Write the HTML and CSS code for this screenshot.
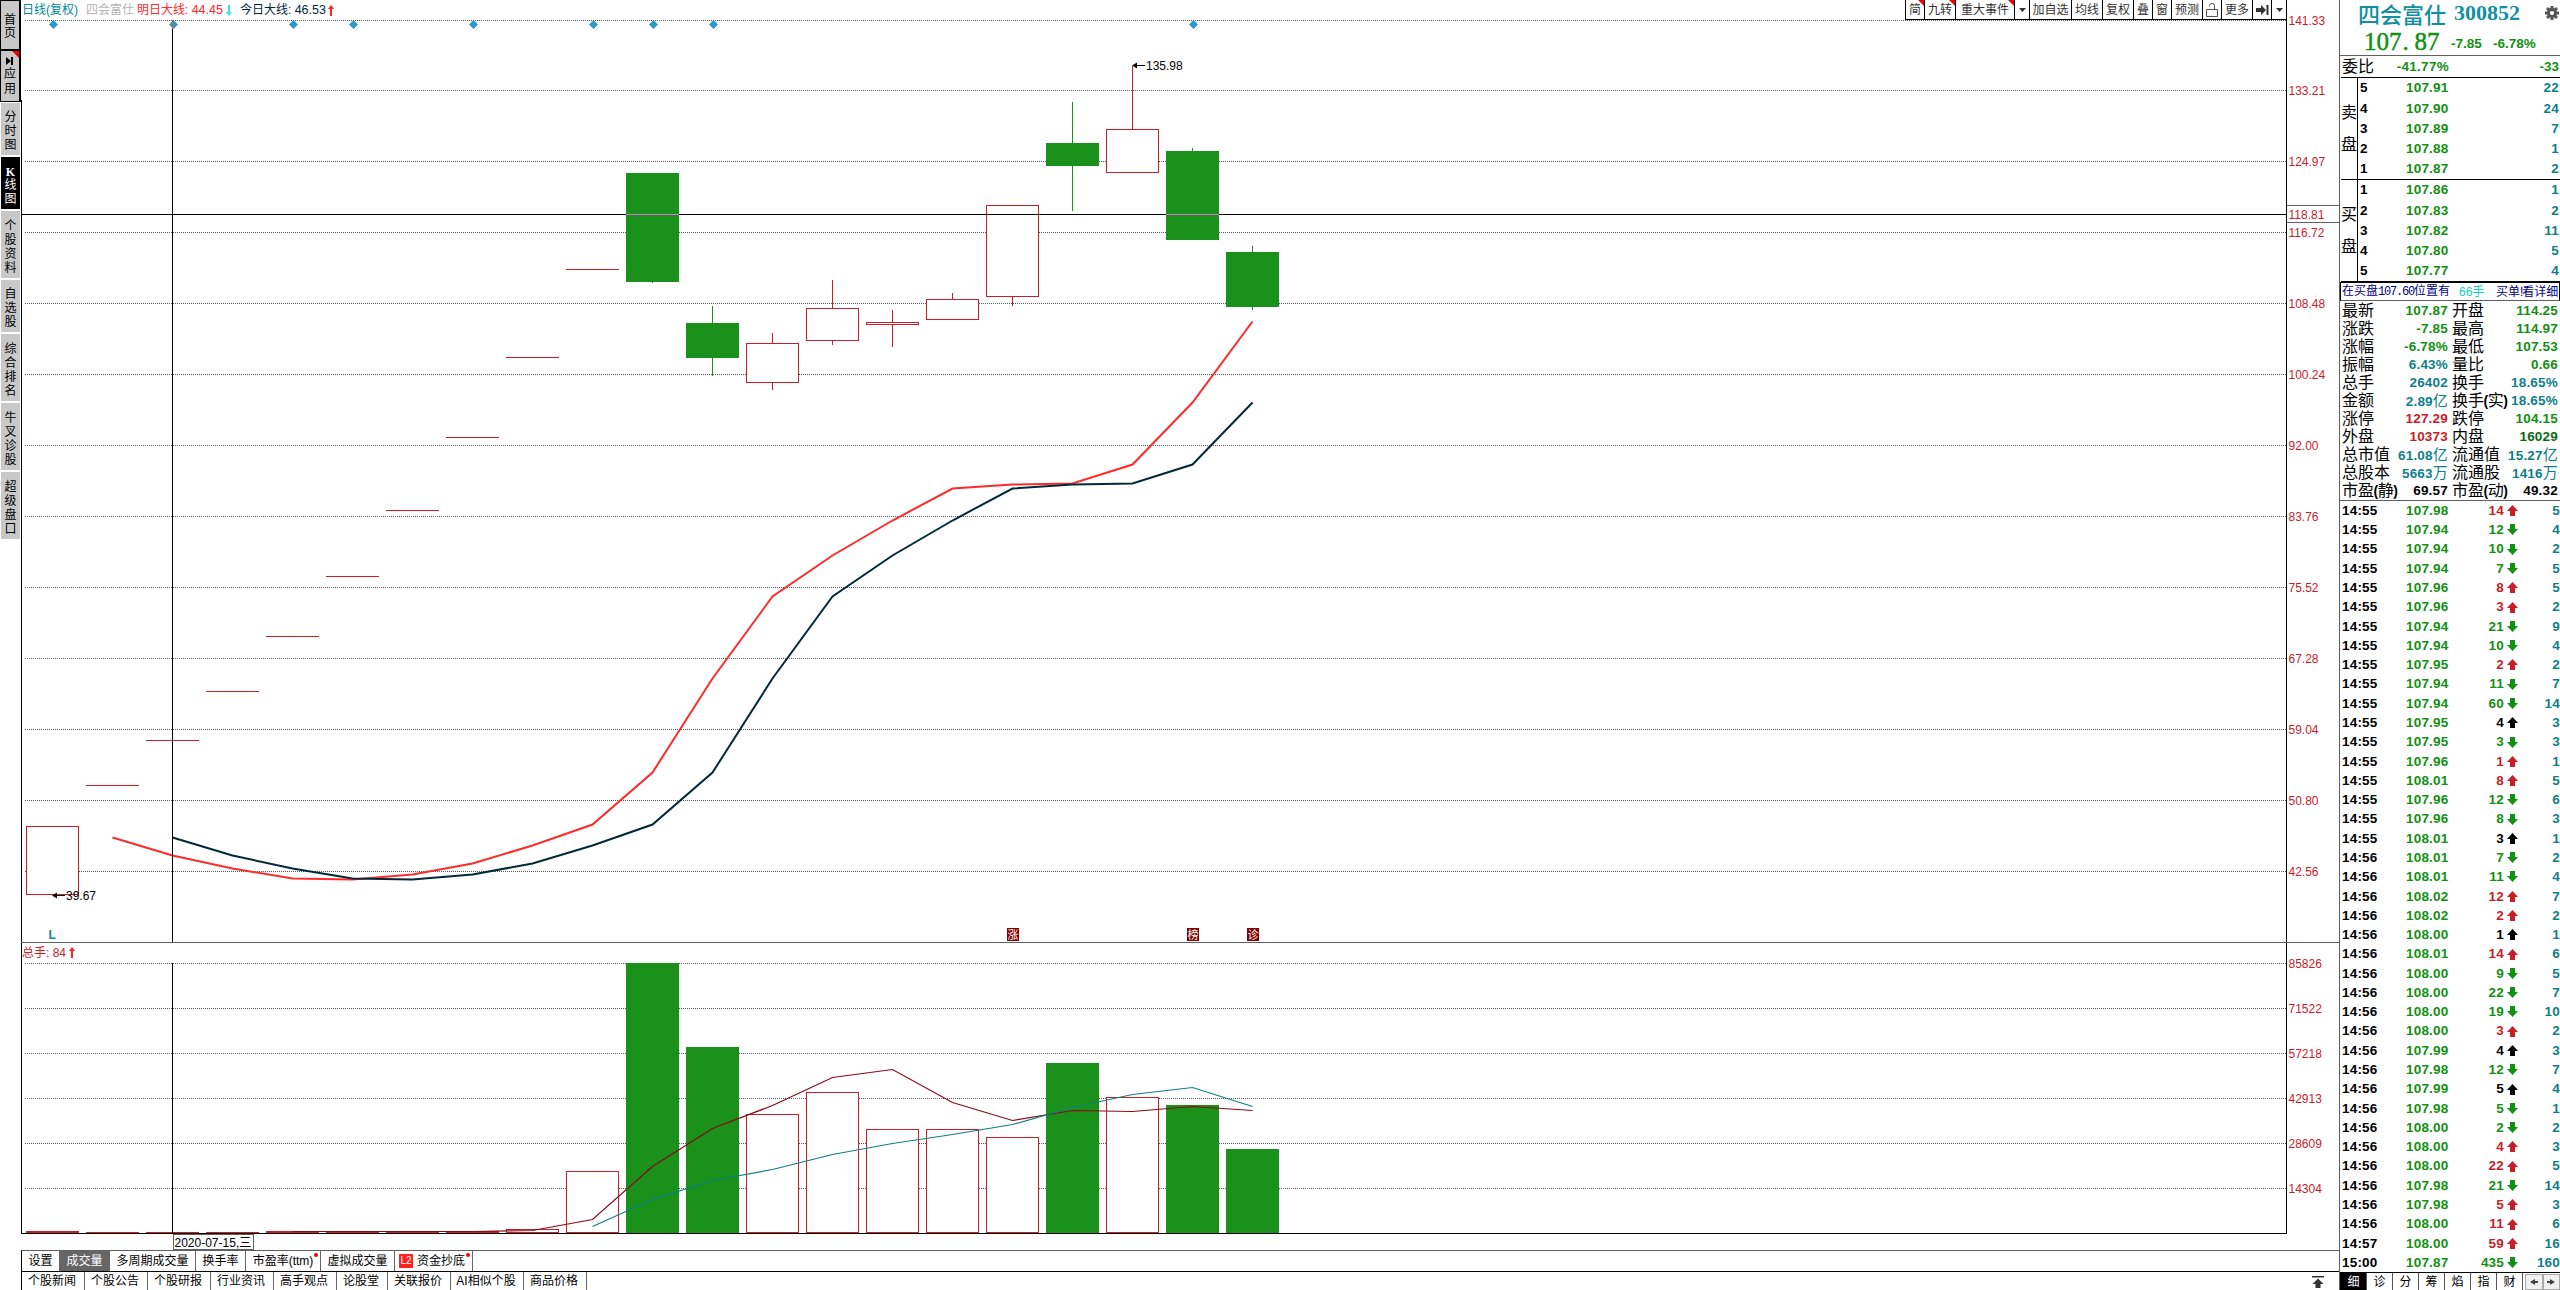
FILE: index.html
```
<!DOCTYPE html>
<html lang="zh-CN">

<head>
  <meta charset="UTF-8">
  <meta name="viewport" content="width=device-width, initial-scale=1.0">
  <title>四会富仕 300852</title>
  <link rel="stylesheet" href="styles.css">
</head>

<body>
  <div class="app">
    <nav class="side">
      <div class="side-tab framed t-home"><span>首</span><span>页</span></div>
      <div class="side-tab framed corner t-app">
        <svg width="8" height="8" viewBox="0 0 8 8"><path d="M0 0L5 4L0 8ZM5 0H7V8H5Z"/></svg>
        <span>应</span><span>用</span>
      </div>
      <div class="side-tab h3"><span>分</span><span>时</span><span>图</span></div>
      <div class="side-tab h3 active"><span class="k">K</span><span>线</span><span>图</span></div>
      <div class="side-tab h4"><span>个</span><span>股</span><span>资</span><span>料</span></div>
      <div class="side-tab h3"><span>自</span><span>选</span><span>股</span></div>
      <div class="side-tab h4"><span>综</span><span>合</span><span>排</span><span>名</span></div>
      <div class="side-tab h4"><span>牛</span><span>叉</span><span>诊</span><span>股</span></div>
      <div class="side-tab h4"><span>超</span><span>级</span><span>盘</span><span>口</span></div>
    </nav>

    <main class="main">
      <header class="head">
        <div class="legend">
          <span class="lg-period">日线(复权)</span>
          <span class="lg-name">四会富仕</span>
          <span class="lg-next">明日大线: <b>44.45</b></span>
          <svg class="lg-arrow down" width="6" height="11" viewBox="0 0 6 11"><path d="M2 0H4V7H6L3 11L0 7H2Z"/></svg>
          <span class="lg-today">今日大线: <b>46.53</b></span>
          <svg class="lg-arrow up" width="6" height="11" viewBox="0 0 6 11"><path d="M2 11H4V4H6L3 0L0 4H2Z"/></svg>
        </div>
        <div class="tools">
          <div class="tool w19 corner">简</div>
          <div class="tool w31 corner">九转</div>
          <div class="tool w59 corner">重大事件</div>
          <div class="tool w15"><svg width="7" height="4" viewBox="0 0 7 4"><path d="M0 0H7L3.5 4Z"/></svg></div>
          <div class="tool w42">加自选</div>
          <div class="tool w31">均线</div>
          <div class="tool w31">复权</div>
          <div class="tool w19">叠</div>
          <div class="tool w19">窗</div>
          <div class="tool w31">预测</div>
          <div class="tool w19"><svg width="12" height="14" viewBox="0 0 12 14"><path class="lock" d="M.5 6.5H11.5V13.5H.5ZM3.5 3.5V2.5Q3.5 .5 6 .5Q8.5 .5 8.5 2.5V6.5"/></svg></div>
          <div class="tool w31">更多</div>
          <div class="tool w19"><svg width="13" height="10" viewBox="0 0 13 10"><path d="M0 3H5V0L10 5L5 10V7H0ZM10.500 0H12.500V10H10.500Z"/></svg></div>
          <div class="tool w15"><svg width="7" height="4" viewBox="0 0 7 4"><path d="M0 0H7L3.5 4Z"/></svg></div>
        </div>
      </header>

      <svg id="chart" class="chart" width="2318" height="1230" viewBox="21 20 2318 1230"></svg>

      <div class="tabs indicators">
        <span class="w39">设置</span>
        <span class="w50 on">成交量</span>
        <span class="w86">多周期成交量</span>
        <span class="w50">换手率</span>
        <span class="w75 dot">市盈率(ttm)</span>
        <span class="w74">虚拟成交量</span>
        <span class="w78 dot"><i class="l2">L2</i>资金抄底</span>
      </div>
      <div class="tabs news">
        <span class="w63">个股新闻</span>
        <span class="w63">个股公告</span>
        <span class="w63">个股研报</span>
        <span class="w63">行业资讯</span>
        <span class="w63">高手观点</span>
        <span class="w51">论股堂</span>
        <span class="w63">关联报价</span>
        <span class="w73">AI相似个股</span>
        <span class="w63">商品价格</span>
        <svg class="to-top" width="12" height="12" viewBox="0 0 12 12"><path d="M0 0H12V1.500H0ZM6 2.500L11.500 8H8.500V12H3.500V8H.5Z"/></svg>
      </div>
    </main>

    <aside class="quote">
      <div class="q-title">
        <span class="q-name">四会富仕</span><span class="q-code">300852</span>
        <svg class="gear" width="14" height="14" viewBox="-7 -7 14 14">
          <g id="teeth"></g>
          <circle r="3.600"/>
        </svg>
      </div>
      <div class="q-price">
        <span class="big">107<i>.</i>87</span><span class="chg">-7.85</span><span class="pct">-6.78%</span>
      </div>
      <div class="q-ratio"><span class="lbl">委比</span><span class="val">-41.77%</span><span class="dif">-33</span></div>
      <div class="book">
        <div class="side-name"><span>卖</span><span>盘</span></div>
        <div class="levels" id="sell"></div>
      </div>
      <div class="book">
        <div class="side-name"><span>买</span><span>盘</span></div>
        <div class="levels" id="buy"></div>
      </div>
      <div class="notice"><span>在买盘<tt>107.60</tt>位置有</span><span class="cy">66手</span><span>买单!</span><span class="more">看详细</span></div>
      <div class="stats" id="stats"></div>
      <div class="ticks" id="ticks"></div>
      <div class="q-tabs">
        <span class="on">细</span><span>诊</span><span>分</span><span>筹</span><span>焰</span><span>指</span><span>财</span>
        <div class="pager">
          <b><svg width="8" height="6" viewBox="0 0 8 6"><path d="M0 3L5 0V2H8V4H5V6Z"/></svg></b>
          <b><svg width="8" height="6" viewBox="0 0 8 6"><path d="M8 3L3 0V2H0V4H3V6Z"/></svg></b>
        </div>
      </div>
    </aside>
  </div>
  <script src="script.js"></script>
</body>

</html>
```

FILE: styles.css
```
* {
  margin: 0;
  padding: 0;
  box-sizing: border-box;
}

body {
  background: #fff;
  font-family: "Liberation Sans", "Noto Sans CJK SC", sans-serif;
  font-size: 12px;
  line-height: 1;
  color: #000;
  overflow: hidden;
}

i {
  font-style: normal;
}

.app {
  display: flex;
  width: 2560px;
  height: 1290px;
}

/* left tabs */
.side {
  width: 21px;
  display: flex;
  flex-direction: column;
}

.side-tab {
  position: relative;
  display: flex;
  flex-direction: column;
  align-items: center;
  justify-content: center;
  gap: 2px;
  margin: 0 1px 2px 1px;
  background: #c8c8c8;
}

.side-tab span {
  height: 12px;
}

.framed {
  margin: 0;
  border: 1px solid #000;
  border-right-width: 2px;
  gap: 1px;
}

.t-home {
  height: 50px;
  padding-top: 3px;
}

.t-app {
  height: 52px;
  gap: 3px;
  margin-bottom: 1px;
}

.h3 {
  height: 52px;
  padding-top: 3px;
}

.h4 {
  height: 67px;
  padding-top: 4px;
}

.active {
  background: #000;
  color: #fff;
}

.side-tab .k {
  font: bold 12px "Liberation Serif", serif;
}

.corner {
  position: relative;
}

.corner::after {
  content: "";
  position: absolute;
  top: 0;
  right: 0;
  border-top: 7px solid #f00000;
  border-left: 7px solid transparent;
}

/* chart column */
.main {
  width: 2318px;
  display: flex;
  flex-direction: column;
}

.head {
  height: 20px;
  display: flex;
  justify-content: space-between;
  padding-right: 53px;
}

.legend {
  display: flex;
  align-items: center;
  padding-left: 1px;
  white-space: nowrap;
}

.legend b {
  font-weight: normal;
  font-size: 12.5px;
}

.lg-period {
  width: 64px;
  color: #008a94;
}

.lg-name {
  width: 51px;
  color: #b4b4b4;
}

.lg-next {
  width: 89px;
  color: #ff2a2a;
}

.lg-today {
  width: 88px;
  color: #002a3a;
}

.lg-arrow.down {
  fill: #2ee6e6;
  margin-right: 8px;
}

.lg-arrow.up {
  fill: #f22;
}

.tools {
  display: flex;
  border-bottom: 1px solid #000;
}

.tool {
  display: flex;
  align-items: center;
  justify-content: center;
  border-left: 1px solid #000;
  color: #333;
  fill: #333;
}

.tools .corner::after {
  border-top-width: 6px;
  border-left-width: 6px;
}

.lock {
  fill: none;
  stroke: #555;
}

.w15 { width: 15px; }
.w19 { width: 19px; }
.w31 { width: 31px; }
.w42 { width: 42px; }
.w59 { width: 59px; }

.chart {
  display: block;
  overflow: visible;
}

.chart text {
  font-size: 12px;
}

.crisp {
  shape-rendering: crispEdges;
}

.grid {
  stroke: #5a5a5a;
  stroke-dasharray: 1 1;
}

.axis-label {
  fill: #cc1a2a;
}

.up-bar {
  fill: #fff;
  stroke: #c81e28;
}

.down-bar {
  fill: #1a911a;
}

.frame {
  stroke: #000;
  fill: none;
}

.gray {
  stroke: #606060;
  fill: none;
}

.ma {
  fill: none;
  stroke-width: 2;
}

.vol-ma {
  fill: none;
  stroke-width: 1.2;
}

/* footer tabs */
.tabs {
  display: flex;
  height: 20px;
}

.tabs span {
  position: relative;
  display: flex;
  align-items: center;
  justify-content: center;
  border-right: 1px solid #666;
  white-space: nowrap;
}

.indicators {
  height: 21px;
  border-top: 1px solid #606060;
  border-left: 1px solid #000;
}

.indicators .on {
  background: #666;
  color: #fff;
}

.dot::after {
  content: "";
  position: absolute;
  top: 2px;
  right: 2px;
  width: 4px;
  height: 4px;
  border-radius: 2px;
  background: #f00;
}

.l2 {
  width: 14px;
  height: 14px;
  margin-right: 4px;
  background: #f22;
  color: #fff;
  font-size: 10px;
  line-height: 14px;
  text-align: center;
}

.w78 {
  padding-right: 3px;
}

.news {
  height: 19px;
  border-top: 1px solid #000;
  border-left: 1px solid #000;
}

.news span {
  padding-right: 2px;
}

.to-top {
  margin: 4px 15px 0 auto;
  fill: #333;
}

.w39 { width: 38px; }
.w50 { width: 50px; }
.w51 { width: 51px; }
.w63 { width: 63px; }
.w73 { width: 73px; }
.w74 { width: 74px; }
.w75 { width: 75px; }
.w78 { width: 78px; }
.w86 { width: 86px; }

/* quote panel */
.quote {
  width: 221px;
  border-left: 1px solid #606060;
  display: flex;
  flex-direction: column;
  font-size: 13.5px;
  font-weight: bold;
  color: #129012;
}

.q-title {
  height: 25px;
  display: flex;
  align-items: center;
  padding-left: 18px;
  color: #1090a0;
}

.q-name {
  width: 96px;
  font: 500 22px/24px "Noto Sans CJK SC", sans-serif;
}

.q-code {
  font: bold 22px/24px "Liberation Serif", serif;
}

.gear {
  margin-left: auto;
  margin-right: 1px;
  fill: #555;
}

.gear circle {
  fill: none;
  stroke: #555;
  stroke-width: 3;
}

.q-price {
  height: 31px;
  display: flex;
  align-items: center;
  padding: 3px 0 0 24px;
  border-bottom: 1px solid #606060;
}

.big {
  width: 87px;
  font: 25px/26px "Liberation Serif", serif;
  -webkit-text-stroke: 0.500px #129012;
}

.big i {
  display: inline-block;
  width: 13px;
  padding-left: 1px;
}

.q-price .chg {
  width: 42px;
  padding-top: 5px;
}

.q-price .pct {
  padding-top: 5px;
}

.lbl {
  font-size: 16px;
  font-weight: normal;
  color: #000;
  white-space: nowrap;
}

.q-ratio {
  height: 22px;
  display: flex;
  align-items: center;
  margin-left: 1px;
  padding: 1px 1px 0 1px;
  border-bottom: 1px solid #000;
}

.q-ratio .val {
  width: 75px;
  text-align: right;
  letter-spacing: 0.300px;
}

.q-ratio .dif {
  margin-left: auto;
}

.book {
  display: flex;
  height: 102px;
  margin-left: 1px;
  border-bottom: 1px solid #000;
}

.side-name {
  width: 17px;
  border-right: 1px solid #000;
  display: flex;
  flex-direction: column;
  align-items: center;
  gap: 16px;
  padding-top: 27px;
  font-size: 16px;
  font-weight: normal;
  color: #000;
}

.levels {
  flex: 1;
  display: flex;
  flex-direction: column;
  letter-spacing: 0.200px;
}

.level {
  flex: 1;
  display: flex;
  align-items: center;
  padding: 0 1px 0 2px;
}

.level .n {
  width: 46px;
  color: #000;
}

.level .q {
  margin-left: auto;
  color: #0d7f88;
}

.notice {
  display: flex;
  align-items: center;
  height: 19px;
  padding-left: 1px;
  border: 1px solid #000;
  border-bottom-color: #606060;
  font-size: 12px;
  font-weight: normal;
  color: #000080;
  white-space: nowrap;
}

.notice tt {
  font: 12px "Liberation Mono", monospace;
  letter-spacing: -1.200px;
}

.notice span:first-child {
  width: 117px;
}

.notice .cy {
  width: 37px;
  color: #14cfc0;
}

.notice .more {
  margin-left: -1px;
}

.stats {
  height: 200px;
  display: grid;
  grid-template-columns: 107px 107px;
  grid-auto-rows: 18px;
  column-gap: 3px;
  padding: 1px 0 0 2px;
  border-bottom: 1px solid #606060;
}

.stat {
  display: flex;
  justify-content: space-between;
  align-items: center;
  white-space: nowrap;
}

.stat > b {
  padding-right: 1px;
  letter-spacing: 0.200px;
}

.stat u {
  text-decoration: none;
  font-size: 15px;
  font-weight: normal;
}

.stat .lbl i {
  font-size: 14px;
  font-weight: bold;
  margin: 0 -0.500px;
}

.c-g { color: #129012; fill: #129012; }
.c-t { color: #0d7f88; }
.c-r { color: #c81e28; fill: #c81e28; }
.c-k { color: #000; fill: #000; }
.c-d { color: #0a6a14; }

.ticks {
  height: 771px;
  display: flex;
  flex-direction: column;
  letter-spacing: 0.200px;
}

.tick {
  flex: 1;
  display: flex;
  align-items: center;
  padding-left: 2px;
}

.tick .t {
  width: 64px;
  color: #000;
}

.tick .n {
  width: 98px;
  display: flex;
  justify-content: space-between;
}

.tick svg {
  margin-left: 3px;
}

.tick .q {
  margin-left: auto;
  color: #0d7f88;
}

.q-tabs {
  flex: 1;
  display: flex;
  border-top: 1px solid #000;
  border-left: 1px solid #000;
  font-size: 12px;
  font-weight: normal;
  color: #000;
}

.q-tabs span {
  width: 26px;
  display: flex;
  align-items: center;
  justify-content: center;
  border-right: 1px solid #555;
}

.q-tabs .on {
  background: #000;
  color: #fff;
}

.pager {
  flex: 1;
  display: flex;
  margin-left: 2px;
}

.pager b {
  flex: 1;
  display: flex;
  align-items: center;
  justify-content: center;
  margin-top: 1px;
  border: 1px solid #aaa;
  background: #f0f0f0;
  fill: #444;
}
```

FILE: script.js
```
const chart = document.querySelector('#chart');
const LEFT = 26;
const STEP = 60;
const WIDTH = 53;

const cx = i => 52.5 + i * STEP;
let out = '';

const line = (x1, y1, x2, y2, cls, extra = '') => {
  out += `<line x1="${x1}" y1="${y1}" x2="${x2}" y2="${y2}" class="crisp ${cls}" ${extra}/>`;
};
const text = (x, y, str, extra = '') => {
  out += `<text x="${x}" y="${y}" ${extra}>${str}</text>`;
};

// grid with axis labels
const prices = ['141.33', '133.21', '124.97', '116.72', '108.48', '100.24', '92.00', '83.76', '75.52', '67.28', '59.04', '50.80', '42.56'];
const priceY = [20, 90, 161, 232, 303, 374, 445, 516, 587, 658, 729, 800, 871];
const volumes = ['85826', '71522', '57218', '42913', '28609', '14304'];

prices.forEach((p, i) => {
  line(25, priceY[i] + 0.5, 2286, priceY[i] + 0.5, 'grid');
  text(2288.5, priceY[i] + 5, p, 'class="axis-label"');
});
volumes.forEach((v, i) => {
  const y = 963 + i * 45;
  line(25, y + 0.5, 2286, y + 0.5, 'grid');
  text(2288.5, y + 5, v, 'class="axis-label"');
});

// candles: [type, top, bottom, high, low]
const candles = [
  ['r', 826, 894], ['f', 785], ['f', 740], ['f', 691], ['f', 636], ['f', 576],
  ['f', 510], ['f', 437], ['f', 357], ['f', 269],
  ['g', 173, 282, 173, 283],
  ['g', 323, 358, 306, 376],
  ['r', 343, 382, 333, 390],
  ['r', 308, 340, 280, 345],
  ['r', 322, 324, 310, 347],
  ['r', 299, 319, 293, 319],
  ['r', 205, 296, 205, 306],
  ['g', 143, 166, 102, 211],
  ['r', 129, 172, 66, 172],
  ['g', 151, 240, 148, 240],
  ['g', 252, 307, 246, 310]
];

const bar = (i, type, top, bottom) => {
  const x = LEFT + i * STEP;
  if (type === 'g') {
    out += `<rect class="crisp down-bar" x="${x}" y="${top}" width="${WIDTH}" height="${bottom - top}"/>`;
  } else if (bottom === top) {
    line(x, top + 0.5, x + WIDTH, top + 0.5, '', 'stroke="#c81e28"');
  } else {
    out += `<rect class="crisp up-bar" x="${x + 0.5}" y="${top + 0.5}" width="${WIDTH - 1}" height="${bottom - top}"/>`;
  }
};

candles.forEach(([type, top, bottom, high, low], i) => {
  const color = type === 'g' ? '#1a911a' : '#c81e28';
  if (type === 'f') {
    bar(i, 'r', top, top);
    return;
  }
  if (high) {
    line(cx(i), high, cx(i), low, '', `stroke="${color}"`);
  }
  bar(i, type, top, bottom);
});

// volume bars
const vol = [1231, 1232, 1232, 1232, 1231, 1231, 1231, 1231, 1229, 1171, 963, 1047, 1114, 1092, 1129, 1129, 1137, 1063, 1097, 1105, 1149];
vol.forEach((top, i) => {
  const green = [10, 11, 17, 19, 20].includes(i);
  bar(i, green ? 'g' : 'r', top, green ? 1233 : 1232);
});

// averages
const poly = (start, ys, cls, color) => {
  const pts = ys.map((y, i) => `${cx(start + i)},${y + 0.5}`).join(' ');
  out += `<polyline class="${cls}" points="${pts}" stroke="${color}"/>`;
};
const ma = [837, 855, 868, 878, 879, 874, 863, 845, 824, 772, 678, 596, 555, 520, 488, 484, 483, 464, 402, 321];
poly(1, ma, 'ma', '#ff2a2a');
poly(2, ma.slice(0, -1), 'ma', '#002a3a');
poly(4, [1231, 1231, 1231, 1231, 1230, 1219, 1166, 1128, 1105, 1077, 1069, 1102, 1120, 1110, 1111, 1106, 1110], 'vol-ma', '#8a0a14');
poly(9, [1226, 1199, 1180, 1169, 1154, 1143, 1134, 1124, 1107, 1094, 1087, 1106], 'vol-ma', '#0d7f88');

// event diamonds
[0, 2, 4, 5, 7, 9, 10, 11, 19].forEach(i => {
  const x = cx(i) + 1;
  out += `<path d="M${x - 4.5} 24.5L${x} 20L${x + 4.5} 24.5L${x} 29Z" fill="#2b9ac8"/>`;
});

// frames
line(21.5, 100, 21.5, 1234, 'frame');
line(2286.5, 0, 2286.5, 1234, 'frame');
line(21, 1233.5, 2287, 1233.5, 'frame');
line(21, 942.5, 2339, 942.5, 'gray');

// crosshair
line(172.5, 20, 172.5, 942, 'frame');
line(172.5, 963, 172.5, 1234, 'frame');
line(172.5, 20, 172.5, 29, '', 'stroke="#d46437"');
line(22, 214.5, 2287, 214.5, 'frame');
[10, 19].forEach(i => line(LEFT + i * STEP, 214.5, LEFT + i * STEP + WIDTH, 214.5, '', 'stroke="#e56ee5"'));
out += '<rect class="crisp gray" x="2286.5" y="205.500" width="52.500" height="17"/>';
line(2286.5, 205, 2286.5, 223, 'frame');
text(2288.5, 218.5, '118.81', 'class="axis-label"');
out += '<rect class="crisp gray" x="173.500" y="1234.500" width="80" height="15"/>';
text(174.5, 1247, '2020-07-15,三');

// extremes
const arrow = (x, y) => {
  line(x + 3, y + 0.5, x + 13, y + 0.5, 'frame');
  out += `<path d="M${x} ${y + 0.5}L${x + 5} ${y - 2.5}V${y + 3.5}Z"/>`;
};
arrow(1132, 65);
text(1146, 70, '135.98');
arrow(52, 895);
text(66, 900, '39.67');

text(48.5, 939, 'L', 'fill="#0d8a94" style="font-weight:bold"');
[[16, '涨'], [19, '榜'], [20, '诊']].forEach(([i, s]) => {
  out += `<rect x="${cx(i) - 5.5}" y="928" width="12" height="13" fill="#800000"/>`;
  text(cx(i) - 5, 938.5, s, 'fill="#fff" style="font-size:11px"');
});

text(22, 957, '总手: 84', 'fill="#c81e28"');
out += '<path d="M71 958V951H69L72 947L75 951H73V958Z" fill="#f22"/>';
chart.innerHTML = out;

// gear teeth
let teeth = '';
for (let a = 0; a < 360; a += 45) {
  teeth += `<rect x="-1.500" y="-7" width="3" height="4" transform="rotate(${a})"/>`;
}
document.querySelector('#teeth').innerHTML = teeth;

// order book
const book = (id, rows) => {
  document.querySelector(id).innerHTML = rows.map(([n, p, q]) =>
    `<div class="level"><span class="n">${n}</span><span>${p}</span><span class="q">${q}</span></div>`).join('');
};
book('#sell', [[5, '107.91', 22], [4, '107.90', 24], [3, '107.89', 7], [2, '107.88', 1], [1, '107.87', 2]]);
book('#buy', [[1, '107.86', 1], [2, '107.83', 2], [3, '107.82', 11], [4, '107.80', 5], [5, '107.77', 4]]);

const stats = [
  ['最新', '107.87', 'g'], ['开盘', '114.25', 'g'],
  ['涨跌', '-7.85', 'g'], ['最高', '114.97', 'g'],
  ['涨幅', '-6.78%', 'g'], ['最低', '107.53', 'g'],
  ['振幅', '6.43%', 't'], ['量比', '0.66', 'g'],
  ['总手', '26402', 't'], ['换手', '18.65%', 't'],
  ['金额', '2.89<u>亿</u>', 't'], ['换手<i>(</i>实<i>)</i>', '18.65%', 't'],
  ['涨停', '127.29', 'r'], ['跌停', '104.15', 'g'],
  ['外盘', '10373', 'r'], ['内盘', '16029', 'd'],
  ['总市值', '61.08<u>亿</u>', 't'], ['流通值', '15.27<u>亿</u>', 't'],
  ['总股本', '5663<u>万</u>', 't'], ['流通股', '1416<u>万</u>', 't'],
  ['市盈<i>(</i>静<i>)</i>', '69.57', 'k'], ['市盈<i>(</i>动<i>)</i>', '49.32', 'k']
];
document.querySelector('#stats').innerHTML = stats.map(([l, v, c]) =>
  `<div class="stat"><span class="lbl">${l}</span><b class="c-${c}">${v}</b></div>`).join('');

// ticks: time price count direction deals
const ticks = `14:55 107.98 14 r 5
14:55 107.94 12 g 4
14:55 107.94 10 g 2
14:55 107.94 7 g 5
14:55 107.96 8 r 5
14:55 107.96 3 r 2
14:55 107.94 21 g 9
14:55 107.94 10 g 4
14:55 107.95 2 r 2
14:55 107.94 11 g 7
14:55 107.94 60 g 14
14:55 107.95 4 k 3
14:55 107.95 3 g 3
14:55 107.96 1 r 1
14:55 108.01 8 r 5
14:55 107.96 12 g 6
14:55 107.96 8 g 3
14:55 108.01 3 k 1
14:56 108.01 7 g 2
14:56 108.01 11 g 4
14:56 108.02 12 r 7
14:56 108.02 2 r 2
14:56 108.00 1 k 1
14:56 108.01 14 r 6
14:56 108.00 9 g 5
14:56 108.00 22 g 7
14:56 108.00 19 g 10
14:56 108.00 3 r 2
14:56 107.99 4 k 3
14:56 107.98 12 g 7
14:56 107.99 5 k 4
14:56 107.98 5 g 1
14:56 108.00 2 g 2
14:56 108.00 4 r 3
14:56 108.00 22 r 5
14:56 107.98 21 g 14
14:56 107.98 5 r 3
14:56 108.00 11 r 6
14:57 108.00 59 r 16
15:00 107.87 435 g 160`;

document.querySelector('#ticks').innerHTML = ticks.split('\n').map(row => {
  const [t, p, n, c, q] = row.split(' ');
  const d = c === 'g' ? 'M3 0H8V5H11L5.5 11L0 5H3Z' : 'M3 11H8V6H11L5.5 0L0 6H3Z';
  return `<div class="tick"><span class="t">${t}</span><span class="n"><span>${p}</span><span class="c-${c}">${n}</span></span>
    <svg class="c-${c}" width="11" height="11" viewBox="0 0 11 11"><path d="${d}"/></svg><span class="q">${q}</span></div>`;
}).join('');
```
